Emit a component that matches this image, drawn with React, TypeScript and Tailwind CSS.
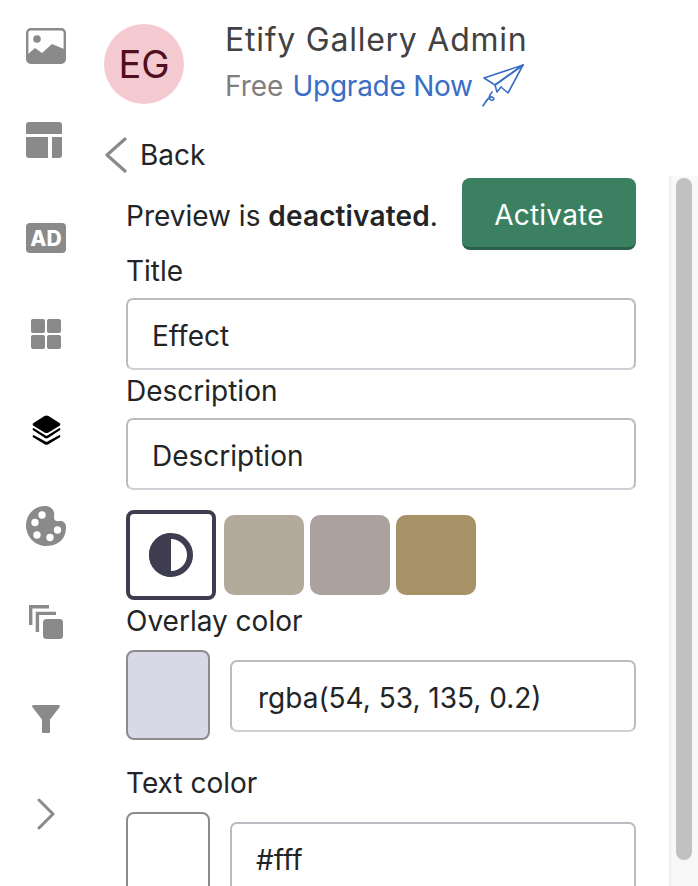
import React from "react";

const G = "#8a8a8a";

const Icons = [
  <svg key="a" width="40" height="36" viewBox="0 0 40 36"><rect x="1.2" y="1.2" width="37.6" height="33.6" rx="3.5" fill="none" stroke={G} strokeWidth="2.4"/><circle cx="11" cy="11" r="3.8" fill={G}/><path d="M2 26 L9 20 L16 25 L26 16 L38 21 V32 a3 3 0 0 1 -3 3 H5 a3 3 0 0 1 -3 -3 Z" fill={G}/></svg>,
  <svg key="b" width="36" height="36" viewBox="0 0 36 36"><path d="M0 12V3a3 3 0 0 1 3-3h30a3 3 0 0 1 3 3v9Z" fill={G}/><path d="M0 15h22v21H3a3 3 0 0 1-3-3Z" fill={G}/><path d="M26 15h10v18a3 3 0 0 1-3 3h-7Z" fill={G}/></svg>,
  <svg key="c" width="40" height="30" viewBox="0 0 40 30"><rect width="40" height="30" rx="4" fill={G}/><text x="20" y="22.500" textAnchor="middle" fontFamily="Inter, sans-serif" fontWeight="800" fontSize="21" fill="#fff">AD</text></svg>,
  <svg key="d" width="30" height="30" viewBox="0 0 30 30" fill={G}><rect width="14" height="14" rx="2"/><rect x="16" width="14" height="14" rx="2"/><rect y="16" width="14" height="14" rx="2"/><rect x="16" y="16" width="14" height="14" rx="2"/></svg>,
  <svg key="e" width="29" height="30" viewBox="0 0 29 30" fill="#000"><path d="M12.5 1 a4 4 0 0 1 4 0 L27.5 8 a1.6 1.6 0 0 1 0 2.8 L16.5 17.5 a4 4 0 0 1-4 0 L1.5 10.8 a1.6 1.6 0 0 1 0-2.8 Z"/><path d="M1.5 13 L14.5 21 L27.5 13 a1.4 1.4 0 0 1 0 2.6 L16 23 a3 3 0 0 1-3 0 L1.5 15.6 a1.4 1.4 0 0 1 0-2.6 Z"/><path d="M1.5 20 L14.5 27 L27.5 20 a1.4 1.4 0 0 1 0 2.6 L16 29.4 a3 3 0 0 1-3 0 L1.5 22.6 a1.4 1.4 0 0 1 0-2.6 Z"/></svg>,
  <svg key="f" width="40" height="40" viewBox="0 0 40 40"><path d="M19 0C8.500 0 0 8.500 0 19.500S9 40 20 40c8 0 14-3 17.500-8.500C39.500 28 40 24 40 21c0-4-3-6.500-6-6-4 .6-6-.5-6-3.500 0-2.500 .8-4 -.5-6.500C26 2 23 0 19 0Z" fill={G}/><circle cx="16" cy="9" r="3.700" fill="#fff"/><circle cx="9" cy="16.500" r="3.700" fill="#fff"/><circle cx="11" cy="29" r="3.700" fill="#fff"/><circle cx="24" cy="31.500" r="3.700" fill="#fff"/><circle cx="31.500" cy="24" r="3.700" fill="#fff"/></svg>,
  <svg key="g" width="34" height="34" viewBox="0 0 34 34" fill="none" stroke={G} strokeWidth="3.400"><path d="M1.700 20V1.700H20"/><path d="M8.400 27V8.400H27"/><rect x="14" y="14" width="20" height="20" rx="3.500" fill={G} stroke="none"/></svg>,
  <svg key="h" width="28" height="28" viewBox="0 0 28 28" fill={G}><path d="M1.500 0h25a1.300 1.300 0 0 1 1 2.200L18 14.500V27a1 1 0 0 1-1 1h-6a1 1 0 0 1-1-1V14.500L.5 2.200A1.300 1.300 0 0 1 1.500 0Z"/></svg>,
  <svg key="i" width="18" height="32" viewBox="0 0 18 32" fill="none" stroke={G} strokeWidth="3" strokeLinecap="round" strokeLinejoin="round"><path d="M2 2l14 14L2 30"/></svg>,
];

const slots = [
  { h: "h-[36px]", mt: "mt-[28px]", ml: "ml-[26px]" },
  { h: "h-[36px]", mt: "mt-[58px]", ml: "ml-[26px]" },
  { h: "h-[30px]", mt: "mt-[65px]", ml: "ml-[26px]" },
  { h: "h-[30px]", mt: "mt-[66px]", ml: "ml-[31px]" },
  { h: "h-[30px]", mt: "mt-[66px]", ml: "ml-[32px]" },
  { h: "h-[40px]", mt: "mt-[61px]", ml: "ml-[26px]" },
  { h: "h-[34px]", mt: "mt-[59px]", ml: "ml-[29px]" },
  { h: "h-[28px]", mt: "mt-[66px]", ml: "ml-[32px]" },
  { h: "h-[32px]", mt: "mt-[65px]", ml: "ml-[37px]" },
];

function Plane() {
  return (
    <svg width="44" height="44" viewBox="0 0 44 44" fill="none" stroke="#3a6ec4" strokeWidth="1.600" strokeLinejoin="round" strokeLinecap="round">
      <path d="M42 2 L3 15 L14 22 Z" />
      <path d="M42 2 L14 22 L16 29 L20 24" />
      <path d="M42 2 L27 30 L20 24" />
      <path d="M11 29 C8 33 7 36 10 37 C13 38 14 35 11 34 C8 33 5 38 2 43" />
    </svg>
  );
}

function Field({ value, className = "" }: { value: string; className?: string }) {
  return (
    <div className={`h-[72px] shrink-0 rounded-[7px] border-2 border-[#b8bcc1] border-b-[#cdd0d4] bg-white flex items-center pt-[3px] text-[28px] text-[#222426] ${className}`}>
      {value}
    </div>
  );
}

function Label({ children, className = "" }: { children: React.ReactNode; className?: string }) {
  return <div className={`text-[28px] leading-[36px] text-[#222426] shrink-0 ${className}`}>{children}</div>;
}

export default function App() {
  return (
    <div className="w-[698px] h-[886px] overflow-hidden bg-white flex font-['Inter',sans-serif]">
      <nav className="w-[104px] shrink-0 flex flex-col">
        {Icons.map((ic, i) => (
          <div key={i} className={`${slots[i].h} ${slots[i].mt} ${slots[i].ml} flex items-start shrink-0`}>
            {ic}
          </div>
        ))}
      </nav>
      <div className="flex-1 min-w-0 flex flex-col">
        <header className="flex h-[120px] shrink-0">
          <div className="mt-[24px] w-[80px] h-[80px] rounded-full bg-[#f4c9d0] text-[#4f0f1f] text-[38px] flex items-center justify-center shrink-0">EG</div>
          <div className="ml-[41px] mt-[19px]">
            <div className="text-[32px] leading-[42px] text-[#424242] tracking-[0.75px] whitespace-nowrap">Etify Gallery Admin</div>
            <div className="flex items-start text-[28px] leading-[36px] mt-[7px] whitespace-nowrap">
              <span className="text-[#7f7f7f]">Free</span>
              <span className="text-[#3a6ec4] ml-[9px] tracking-[-0.25px]">Upgrade Now</span>
              <span className="ml-[8px] -mt-[5px]"><Plane /></span>
            </div>
          </div>
        </header>
        <div className="flex items-center h-[40px] mt-[15px] shrink-0">
          <svg width="24" height="36" viewBox="0 0 24 36" fill="none" stroke="#8a8a8a" strokeWidth="3.200" strokeLinecap="round" strokeLinejoin="round"><path d="M21 2 L3 18 L21 34" /></svg>
          <span className="ml-[12px] text-[28px] text-[#222426]">Back</span>
        </div>
        <div className="flex flex-1 min-h-0 mt-[1px]">
          <div className="w-[565px] shrink-0 flex flex-col pl-[22px] pr-[33px]">
            <div className="flex items-center justify-between h-[72px] shrink-0 mt-[2px]">
              <div className="text-[28px] text-[#222426] whitespace-nowrap mt-[4px]">Preview is <b className="font-semibold tracking-[0.15px]">deactivated</b>.</div>
              <div className="w-[174px] h-[72px] rounded-[8px] bg-[#3a8061] border-b-[3px] border-[#2a6049] text-white text-[28px] tracking-[0.2px] pt-[4px] flex items-center justify-center">Activate</div>
            </div>
            <Label className="mt-[3px]">Title</Label>
            <Field value="Effect" className="mt-[9px] pl-[24px]" />
            <Label className="mt-[3px]">Description</Label>
            <Field value="Description" className="mt-[9px] pl-[24px]" />
            <div className="flex items-center gap-[6px] mt-[20px] shrink-0">
              <div className="w-[90px] h-[90px] rounded-[8px] border-[4px] border-[#3e3d50] flex items-center justify-center mr-[2px]">
                <svg width="44" height="44" viewBox="0 0 44 44"><circle cx="22" cy="22" r="19" fill="#fff" stroke="#3e3d50" strokeWidth="6"/><path d="M22 0a22 22 0 0 0 0 44Z" fill="#3e3d50"/></svg>
              </div>
              <div className="w-[80px] h-[80px] rounded-[10px] bg-[#b4aa9c]" />
              <div className="w-[80px] h-[80px] rounded-[10px] bg-[#aba29d]" />
              <div className="w-[80px] h-[80px] rounded-[10px] bg-[#a79268]" />
            </div>
            <Label className="mt-[3px]">Overlay color</Label>
            <div className="flex items-start gap-[20px] mt-[11px] shrink-0">
              <div className="w-[84px] h-[90px] shrink-0 rounded-[8px] bg-[#d8d8e6] border-2 border-[#8c8c8c]" />
              <Field value="rgba(54, 53, 135, 0.2)" className="flex-1 mt-[10px] pl-[26px]" />
            </div>
            <Label className="mt-[25px]">Text color</Label>
            <div className="flex items-start gap-[20px] mt-[11px] shrink-0">
              <div className="w-[84px] h-[90px] shrink-0 rounded-[8px] bg-white border-2 border-[#8c8c8c]" />
              <Field value="#fff" className="flex-1 mt-[10px] pl-[24px]" />
            </div>
          </div>
          <div className="w-[29px] shrink-0 bg-[#f8f8f8] border-l-2 border-[#efefef] pl-[5px] pt-[2px]">
            <div className="w-[16px] h-[682px] rounded-full bg-[#c1c1c1]" />
          </div>
        </div>
      </div>
    </div>
  );
}
